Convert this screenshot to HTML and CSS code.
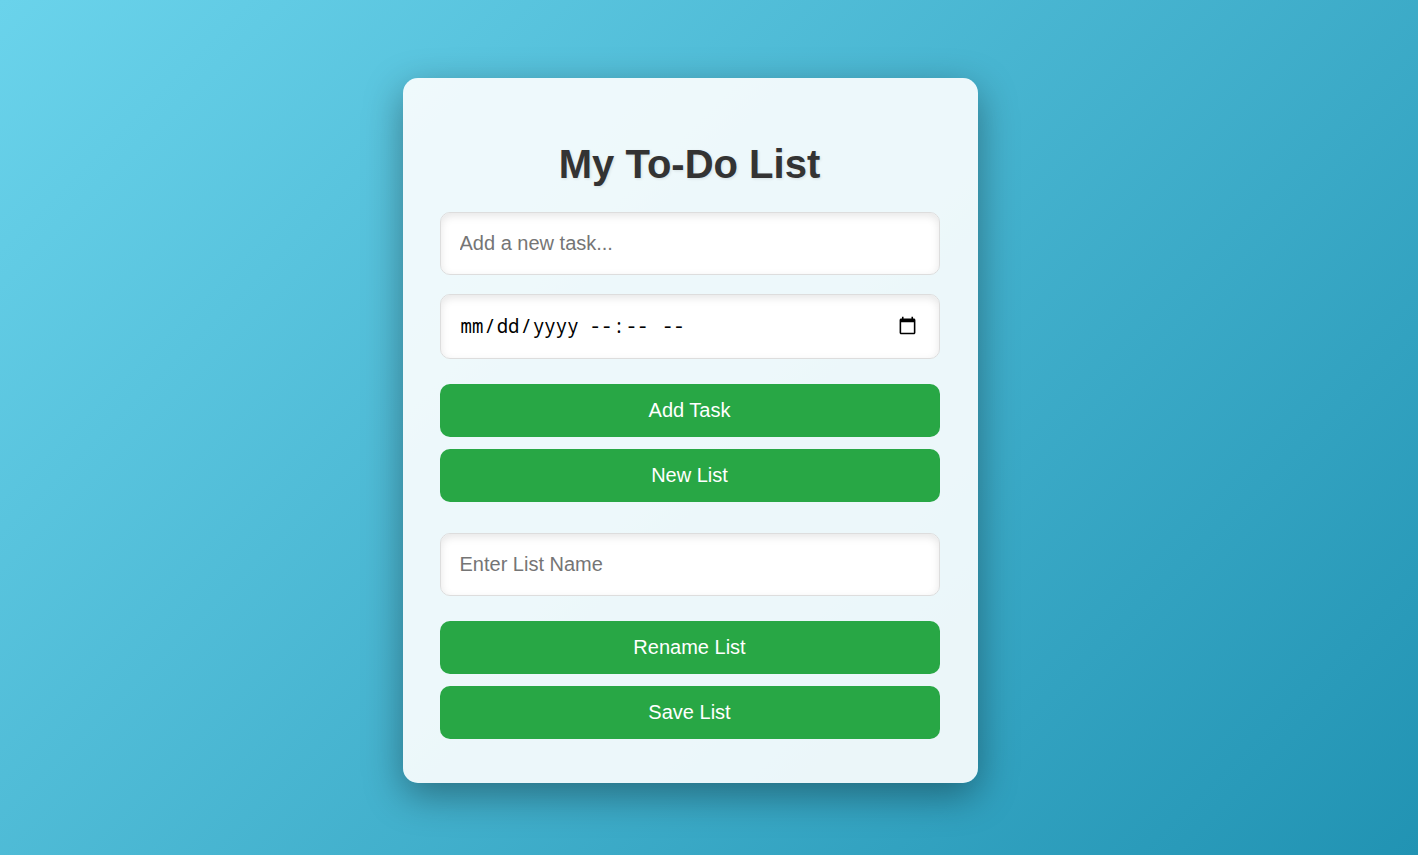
FILE: index.html
```html
<!DOCTYPE html>
<html lang="en">
<head>
<meta charset="utf-8">
<title>My To-Do List</title>
<link rel="stylesheet" href="styles.css">
</head>
<body>
<main class="card">
  <h1 class="title">My To-Do List</h1>
  <form class="group">
    <input class="field" type="text" placeholder="Add a new task..." aria-label="New task">
    <div class="field field-date">
      <input class="date-part date-day" type="date" aria-label="Due date">
      <input class="date-part" type="time" aria-label="Due time">
      <button class="picker" type="button" aria-label="Open calendar">
        <svg class="picker-icon" viewBox="0 0 24 24" aria-hidden="true"><path d="M20 3h-1V1h-2v2H7V1H5v2H4c-1.100 0-2 .9-2 2v16c0 1.100.9 2 2 2h16c1.100 0 2-.9 2-2V5c0-1.100-.9-2-2-2zm0 18H4V8h16v13z"/></svg>
      </button>
    </div>
    <div class="actions">
      <button class="button" type="button">Add Task</button>
      <button class="button" type="button">New List</button>
    </div>
  </form>
  <form class="group">
    <input class="field" type="text" placeholder="Enter List Name" aria-label="List name">
    <div class="actions">
      <button class="button" type="button">Rename List</button>
      <button class="button" type="button">Save List</button>
    </div>
  </form>
</main>
</body>
</html>
```
FILE: styles.css
```css
* {
  box-sizing: border-box;
}

body {
  display: flex;
  justify-content: center;
  align-items: center;
  min-height: 100vh;
  margin: 0;
  padding: 24px 38px 18px 0;
  font-family: "Liberation Sans", Arial, sans-serif;
  background: linear-gradient(135deg, #6ad3eb, #2193b3);
}

.card {
  width: 100%;
  max-width: 575px;
  padding: 63px 38px 44px 37px;
  border-radius: 15px;
  background: rgba(255, 255, 255, 0.9);
  box-shadow: 0 12px 38px rgba(0, 0, 0, 0.37);
}

.title {
  margin: 0 0 24px;
  font-size: 40px;
  line-height: 47px;
  text-align: center;
  color: #333;
  text-shadow: 1px 1px 3px rgba(0, 0, 0, 0.1);
}

.group {
  display: flex;
  flex-direction: column;
  gap: 19px;
}

.group + .group {
  margin-top: 31px;
}

.field {
  width: 100%;
  height: 63px;
  padding: 0 19px;
  border: 1px solid #ddd;
  border-radius: 10px;
  background: #fff;
  box-shadow: inset 0 3px 8px rgba(0, 0, 0, 0.1);
  font-family: inherit;
  font-size: 20px;
}

.field-date {
  display: flex;
  align-items: center;
  gap: 10px;
  height: 65px;
  padding-bottom: 2px;
}

.date-part {
  padding: 0;
  border: 0;
  background: transparent;
  color: #000;
  font-family: "Noto Sans Mono", "DejaVu Sans Mono", monospace;
  font-size: 19px;
}

.date-day {
  width: 119px;
}

.date-part::-webkit-calendar-picker-indicator {
  display: none;
}

.picker {
  display: flex;
  margin-left: auto;
  padding: 0 3px;
  border: 0;
  background: transparent;
}

.picker-icon {
  width: 19px;
  height: 19px;
}

.actions {
  display: flex;
  flex-direction: column;
  gap: 12px;
  margin-top: 6px;
}

.button {
  height: 53px;
  border: 0;
  border-radius: 10px;
  background: #28a745;
  color: #fff;
  font-family: inherit;
  font-size: 20px;
}
```
